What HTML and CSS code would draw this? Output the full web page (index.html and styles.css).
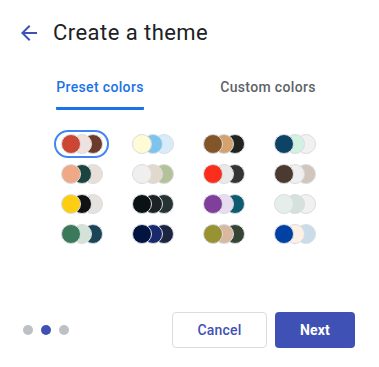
FILE: index.html
```html
<!DOCTYPE html>
<html lang="en">
<head>
  <meta charset="UTF-8" />
  <title>Create a theme</title>
  <link rel="stylesheet" href="styles.css">
</head>
<body>

<div class="dialog">
  <div class="header">
    <button class="back" aria-label="Back">
      <svg width="24" height="24" viewBox="0 0 24 24"><path d="M20 11H7.83l5.59-5.59L12 4l-8 8 8 8 1.41-1.41L7.83 13H20v-2z" fill="#3f51b5"/></svg>
    </button>
    <h1>Create a theme</h1>
  </div>

  <div class="tabs">
    <div class="tab active"><span>Preset colors</span></div>
    <div class="tab"><span>Custom colors</span></div>
  </div>

  <div class="swatches">
    <button class="swatch selected"><i style="background:#cc4634"></i><i style="background:#efe2de"></i><i style="background:#6d3b2a"></i></button>
    <button class="swatch"><i style="background:#fffbd5"></i><i style="background:#7cc4ef"></i><i style="background:#d6ecfb"></i></button>
    <button class="swatch"><i style="background:#83562a"></i><i style="background:#d4a16f"></i><i style="background:#222420"></i></button>
    <button class="swatch"><i style="background:#0d4466"></i><i style="background:#d3f1df"></i><i style="background:#f1f1f1"></i></button>

    <button class="swatch"><i style="background:#f0a987"></i><i style="background:#1b4340"></i><i style="background:#e8e0d8"></i></button>
    <button class="swatch"><i style="background:#f1efed"></i><i style="background:#e2d9cd"></i><i style="background:#b4c29a"></i></button>
    <button class="swatch"><i style="background:#fb2d1b"></i><i style="background:#e9e9e9"></i><i style="background:#343434"></i></button>
    <button class="swatch"><i style="background:#4a3a30"></i><i style="background:#efefef"></i><i style="background:#d0c6bc"></i></button>

    <button class="swatch"><i style="background:#fccd10"></i><i style="background:#121212"></i><i style="background:#e6e3de"></i></button>
    <button class="swatch"><i style="background:#0a1214"></i><i style="background:#1c2226"></i><i style="background:#263333"></i></button>
    <button class="swatch"><i style="background:#7f3f9a"></i><i style="background:#e8ddf0"></i><i style="background:#0d5c70"></i></button>
    <button class="swatch"><i style="background:#e6eeea"></i><i style="background:#d5e1dc"></i><i style="background:#f1f1f1"></i></button>

    <button class="swatch"><i style="background:#3a7a5a"></i><i style="background:#d3e3d8"></i><i style="background:#1b4456"></i></button>
    <button class="swatch"><i style="background:#021440"></i><i style="background:#18296e"></i><i style="background:#1d2440"></i></button>
    <button class="swatch"><i style="background:#989232"></i><i style="background:#d9b8a0"></i><i style="background:#364434"></i></button>
    <button class="swatch"><i style="background:#0141a4"></i><i style="background:#fdf0e6"></i><i style="background:#c8dde9"></i></button>
  </div>

  <div class="footer">
    <div class="dots">
      <span class="dot"></span>
      <span class="dot active"></span>
      <span class="dot"></span>
    </div>
    <div class="actions">
      <button class="btn cancel">Cancel</button>
      <button class="btn next">Next</button>
    </div>
  </div>
</div>

</body>
</html>
```

FILE: styles.css
```css
* {
  box-sizing: border-box;
}
body {
  margin: 0;
  background: #ffffff;
  font-family: Roboto, 'Liberation Sans', sans-serif;
}
.dialog {
  width: 379px;
  height: 367px;
  display: flex;
  flex-direction: column;
}
.header {
  display: flex;
  align-items: center;
  height: 24px;
  margin: 21px 0 0 17px;
}
.back {
  width: 24px;
  height: 24px;
  padding: 0;
  border: none;
  background: none;
  cursor: pointer;
}
.back svg {
  display: block;
}
h1 {
  margin: 0 0 0 12px;
  font-size: 22px;
  font-weight: 400;
  color: #202124;
  line-height: 24px;
  letter-spacing: 0.45px;
}
.tabs {
  display: flex;
  margin: 25px 0 0 16px;
  width: 336px;
}
.tab {
  flex: 1;
  text-align: center;
  height: 40px;
}
.tab span {
  display: inline-block;
  height: 40px;
  padding-top: 9px;
  font-size: 14px;
  font-weight: 500;
  color: #5f6368;
  letter-spacing: 0.35px;
}
.tab.active span {
  color: #1a73e8;
  border-bottom: 3px solid #1a73e8;
  border-radius: 0 0 1px 1px;
}
.swatches {
  display: grid;
  grid-template-columns: repeat(4, 55px);
  column-gap: 16px;
  row-gap: 2px;
  margin: 20px 0 0 54px;
}
.swatch {
  display: flex;
  width: 55px;
  height: 28px;
  padding: 2px 5px;
  border: 2px solid transparent;
  border-radius: 14px;
  background: none;
  cursor: pointer;
}
.swatch.selected {
  border-color: #4285f4;
}
.swatch i {
  flex: none;
  width: 20px;
  height: 20px;
  border-radius: 50%;
  border: 1px solid #dadce0;
  margin-left: -9px;
}
.swatch i:first-child {
  margin-left: 0;
  position: relative;
  z-index: 2;
}
.swatch i:nth-child(2) {
  position: relative;
  z-index: 1;
}
.footer {
  margin-top: auto;
  display: flex;
  align-items: center;
  justify-content: space-between;
  padding: 0 24px 19px 23px;
}
.dots {
  display: flex;
  gap: 8px;
}
.dot {
  width: 10px;
  height: 10px;
  border-radius: 50%;
  background: #bdc1c6;
}
.dot.active {
  background: #3f51b5;
}
.actions {
  display: flex;
  gap: 8px;
}
.btn {
  height: 36px;
  border-radius: 4px;
  font-family: Roboto, 'Liberation Sans', sans-serif;
  font-size: 14px;
  font-weight: 500;
  letter-spacing: 0.2px;
  cursor: pointer;
}
.cancel {
  width: 95px;
  background: #ffffff;
  border: 1px solid #dadce0;
  color: #3f51b5;
}
.next {
  width: 80px;
  background: #3f51b5;
  border: none;
  color: #ffffff;
  font-weight: 700;
}
```
